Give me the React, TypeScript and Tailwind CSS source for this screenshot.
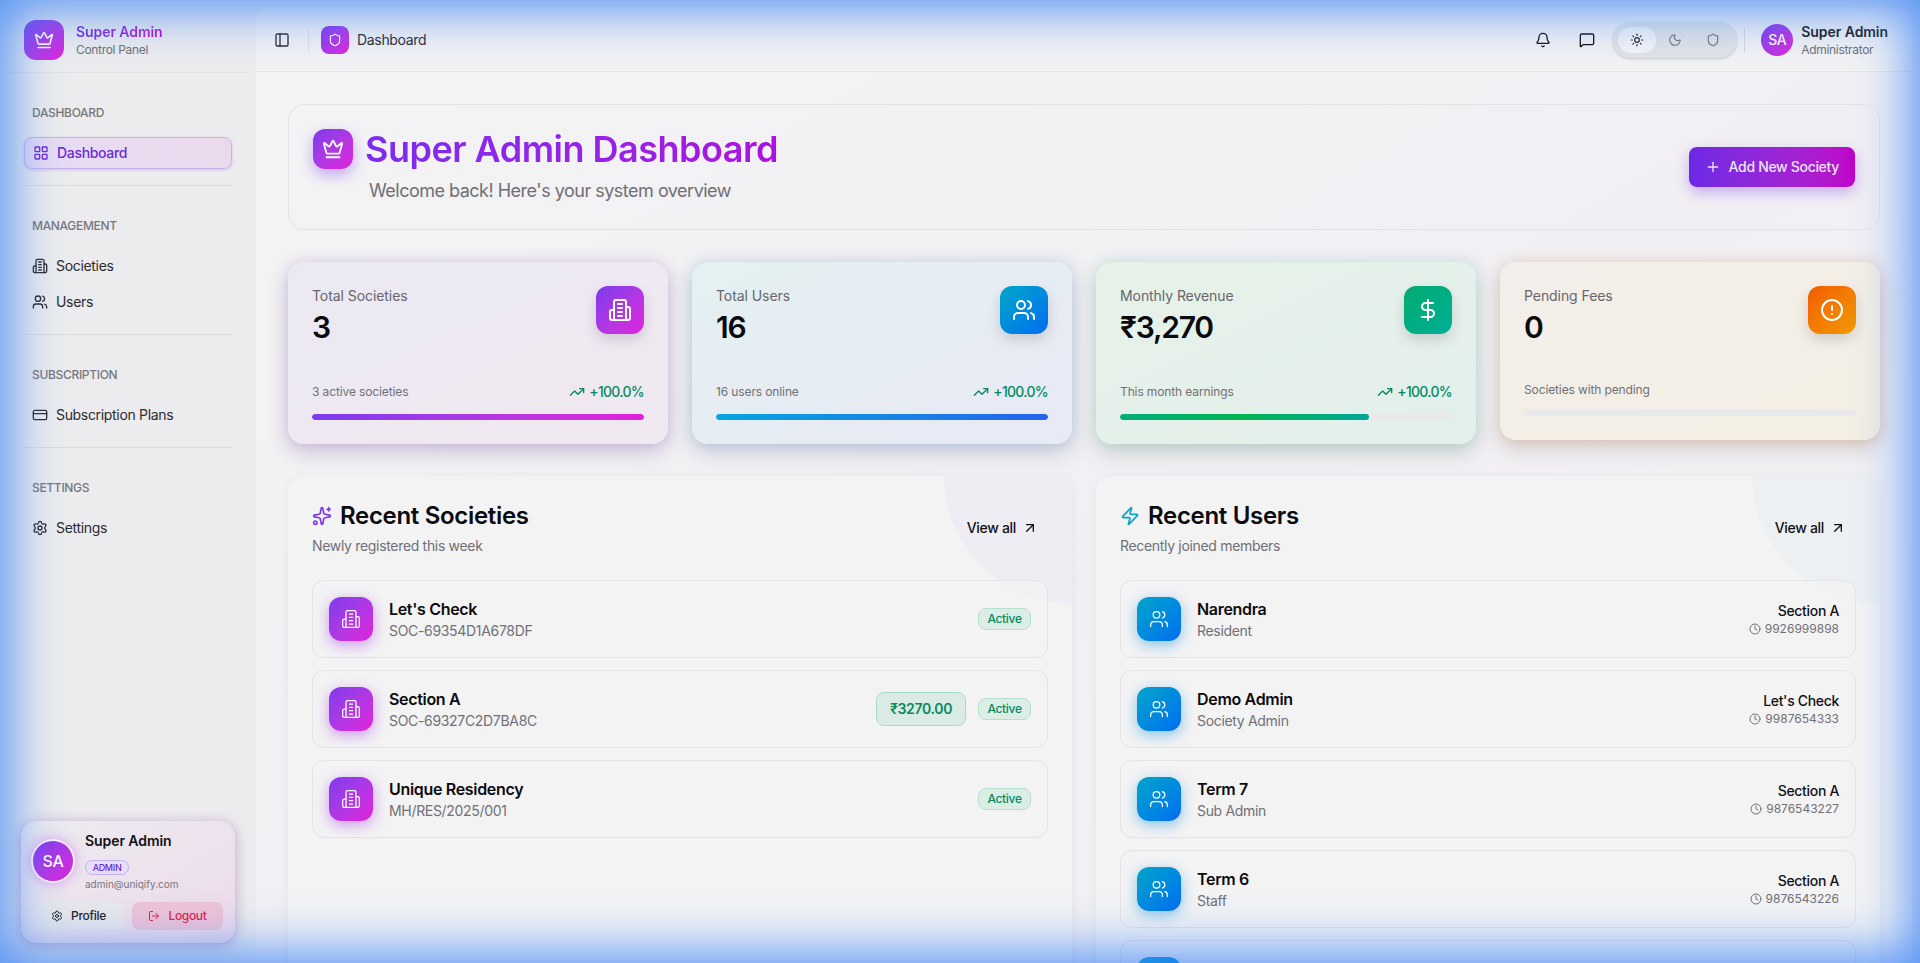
import React from 'react';
import {
  ArrowUpRight,
  Bell,
  CircleAlert,
  Clock,
  Crown,
  CreditCard,
  DollarSign,
  LayoutGrid,
  LogOut,
  MessageSquare,
  Moon,
  PanelLeft,
  Plus,
  Settings,
  Shield,
  Sparkles,
  Sun,
  TrendingUp,
  Users,
  Zap,
} from 'lucide-react';

const purple = 'bg-gradient-to-br from-[#7c3aed] to-[#e11ddb]';
const blue = 'bg-gradient-to-br from-[#06a5c9] to-[#0a6cf0]';

// the tower with two wings, lucide's current Building2 has a door instead
const Tower = ({ size = 16, strokeWidth = 2 }: { size?: number; strokeWidth?: number }) => (
  <svg
    width={size}
    height={size}
    viewBox="0 0 24 24"
    fill="none"
    stroke="currentColor"
    strokeWidth={strokeWidth}
    strokeLinecap="round"
    strokeLinejoin="round"
  >
    <path d="M6 22V4a2 2 0 0 1 2-2h8a2 2 0 0 1 2 2v18Z" />
    <path d="M6 12H4a2 2 0 0 0-2 2v6a2 2 0 0 0 2 2h2" />
    <path d="M18 9h2a2 2 0 0 1 2 2v9a2 2 0 0 1-2 2h-2" />
    <path d="M10 6h4" />
    <path d="M10 10h4" />
    <path d="M10 14h4" />
    <path d="M10 18h4" />
  </svg>
);

const NavGroup = ({ label, children }: { label: string; children: React.ReactNode }) => (
  <div className="mx-6 border-b border-[#dcdcde] pb-4 pt-8">
    <div className="mb-4 ml-2 text-xs font-medium leading-4 text-[#77777d]">{label}</div>
    <div className="flex w-52 flex-col gap-1">{children}</div>
  </div>
);

const NavItem = ({ icon: Icon, label }: { icon: any; label: string }) => (
  <div className="flex h-8 items-center gap-2 px-2 text-sm text-[#2b2b30]">
    <Icon size={16} />
    <span>{label}</span>
  </div>
);

const stats = [
  {
    label: 'Total Societies',
    value: '3',
    note: '3 active societies',
    icon: Tower,
    box: purple,
    bar: 'bg-gradient-to-r from-[#7c3aed] to-[#e11ddb]',
    width: '100%',
    card: 'from-[#eae9f2] to-[#f1e8f1] shadow-[0_8px_20px_rgba(90,70,130,0.25),0_0_14px_rgba(190,110,230,0.22)]',
  },
  {
    label: 'Total Users',
    value: '16',
    note: '16 users online',
    icon: Users,
    box: blue,
    bar: 'bg-gradient-to-r from-[#06a5e0] to-[#2563eb]',
    width: '100%',
    card: 'from-[#e4f0f1] to-[#e8e9f5] shadow-[0_8px_20px_rgba(70,90,130,0.25),0_0_14px_rgba(90,170,230,0.22)]',
  },
  {
    label: 'Monthly Revenue',
    value: '₹3,270',
    note: 'This month earnings',
    icon: DollarSign,
    box: 'bg-gradient-to-br from-[#02ab6e] to-[#02ae96]',
    bar: 'bg-gradient-to-r from-[#02ae78] via-[#04b553] to-[#02a595]',
    width: '75%',
    card: 'from-[#e6f1e9] to-[#e3efeb] shadow-[0_8px_20px_rgba(70,110,100,0.25),0_0_14px_rgba(90,210,180,0.2)]',
  },
  {
    label: 'Pending Fees',
    value: '0',
    note: 'Societies with pending',
    icon: CircleAlert,
    box: 'bg-gradient-to-br from-[#f35a02] to-[#f09a02]',
    width: '0%',
    card: 'from-[#f3eeea] to-[#f3efe3] shadow-[0_8px_20px_rgba(120,90,70,0.25),0_0_14px_rgba(240,150,90,0.2)]',
  },
];

const societies = [
  { name: "Let's Check", code: 'SOC-69354D1A678DF' },
  { name: 'Section A', code: 'SOC-69327C2D7BA8C', amount: '₹3270.00' },
  { name: 'Unique Residency', code: 'MH/RES/2025/001' },
];

const users = [
  { name: 'Narendra', role: 'Resident', where: 'Section A', phone: '9926999898' },
  { name: 'Demo Admin', role: 'Society Admin', where: "Let's Check", phone: '9987654333' },
  { name: 'Term 7', role: 'Sub Admin', where: 'Section A', phone: '9876543227' },
  { name: 'Term 6', role: 'Staff', where: 'Section A', phone: '9876543226' },
];

const rowClass = 'flex h-[78px] items-center justify-between rounded-xl border border-[#e4e4e6] bg-[#f2f2f3]/70 p-4';

const RecentCard = ({
  icon,
  title,
  sub,
  corner,
  children,
}: {
  icon: React.ReactNode;
  title: string;
  sub: string;
  corner: string;
  children: React.ReactNode;
}) => (
  <section className="relative overflow-hidden rounded-2xl bg-[#f3f3f4] p-6 shadow-[0_2px_10px_rgba(60,60,80,0.07)]">
    <div className={`absolute right-0 top-0 h-32 w-32 rounded-bl-full ${corner}`} />
    <div className="relative mb-6 flex h-14 items-center justify-between">
      <div>
        <div className="flex items-center gap-2 text-2xl font-semibold leading-8 tracking-[-0.013em] text-[#0b0b0f]">
          {icon}
          <h2>{title}</h2>
        </div>
        <p className="mt-1 text-sm leading-5 text-[#707076]">{sub}</p>
      </div>
      <button className="flex h-9 items-center gap-1.5 pl-3 pr-2.5 text-sm font-medium text-[#111115]">
        View all <ArrowUpRight size={16} />
      </button>
    </div>
    <div className="relative flex flex-col gap-3">{children}</div>
  </section>
);

export default function App() {
  return (
    <div className="relative flex h-[963px] overflow-hidden bg-[#ececee] font-[Inter,sans-serif] tracking-[-0.02em]">
      <aside className="flex h-full w-64 shrink-0 flex-col">
        <div className="mx-2 box-content flex h-[65px] shrink-0 items-center gap-3 border-b border-[#e2e2e4] px-4 pt-[7px]">
          <div className={`flex h-10 w-10 items-center justify-center rounded-xl text-white ${purple}`}>
            <Crown size={20} />
          </div>
          <div>
            <div className="bg-gradient-to-r from-[#6d28e6] to-[#c000d0] bg-clip-text text-sm font-semibold leading-5 tracking-[-0.005em] text-transparent">
              Super Admin
            </div>
            <div className="text-xs leading-4 text-[#707076]">Control Panel</div>
          </div>
        </div>

        <NavGroup label="DASHBOARD">
          <div className="flex h-8 items-center gap-2 rounded-lg border border-[#c9b3ee] bg-gradient-to-r from-[#e6dcf3] to-[#ecd9ec] px-2 text-sm font-medium text-[#6d28d9] shadow-[0_1px_3px_rgba(110,60,200,0.25)]">
            <LayoutGrid size={16} />
            <span>Dashboard</span>
          </div>
        </NavGroup>
        <NavGroup label="MANAGEMENT">
          <NavItem icon={Tower} label="Societies" />
          <NavItem icon={Users} label="Users" />
        </NavGroup>
        <NavGroup label="SUBSCRIPTION">
          <NavItem icon={CreditCard} label="Subscription Plans" />
        </NavGroup>
        <div className="mx-6 pt-8">
          <div className="mb-4 ml-2 text-xs font-medium leading-4 text-[#77777d]">SETTINGS</div>
          <NavItem icon={Settings} label="Settings" />
        </div>

        <div className="mx-[21px] mb-5 mt-auto rounded-2xl bg-gradient-to-br from-[#ececf0] to-[#edd9ea] px-3 pb-[13px] pt-[10px] shadow-[0_4px_14px_rgba(80,60,130,0.25),0_0_12px_rgba(200,110,220,0.25)]">
          <div className="flex items-center gap-3">
            <div className={`flex h-10 w-10 shrink-0 items-center justify-center rounded-full text-base font-medium text-white ring-2 ring-white/80 shadow-[0_0_14px_rgba(190,60,230,0.6)] ${purple}`}>
              SA
            </div>
            <div>
              <div className="text-sm font-semibold leading-5 tracking-[-0.005em] text-[#111115]">Super Admin</div>
              <span className="mt-[9px] flex h-[15px] w-11 items-center justify-center rounded-full border border-[#c4aef0] bg-[#e6dff5] text-[9px] font-medium text-[#6d28d9]">
                ADMIN
              </span>
              <div className="mt-[3px] text-[10px] leading-3 tracking-normal text-[#77777d]">admin@uniqify.com</div>
            </div>
          </div>
          <div className="mt-3 flex gap-2">
            <button className="flex h-7 flex-1 items-center justify-center gap-2 rounded-lg bg-[#e8e8eb] text-xs font-medium text-[#222226]">
              <Settings size={12} /> Profile
            </button>
            <button className="flex h-7 flex-1 items-center justify-center gap-2 rounded-lg bg-[#eec3d7] text-xs font-medium text-[#e11d48]">
              <LogOut size={12} /> Logout
            </button>
          </div>
        </div>
      </aside>

      <main className="mr-2 mt-2 min-w-0 flex-1 overflow-hidden rounded-t-xl bg-[#f2f2f3]">
        <header className="flex h-16 items-center border-b border-[#e4e4e6] pl-3 pr-6">
          <button className="flex h-7 w-7 items-center justify-center text-[#2b2b30]">
            <PanelLeft size={16} />
          </button>
          <div className="mx-3 h-6 w-px bg-[#dfdfe2]" />
          <div className={`flex h-7 w-7 items-center justify-center rounded-lg text-white ${purple}`}>
            <Shield size={14} />
          </div>
          <span className="ml-2 text-sm text-[#2b2b30]">Dashboard</span>

          <div className="ml-auto flex items-center gap-2">
            <button className="flex h-9 w-9 items-center justify-center text-[#111115]">
              <Bell size={16} />
            </button>
            <button className="flex h-9 w-9 items-center justify-center text-[#111115]">
              <MessageSquare size={16} />
            </button>
            <div className="flex h-9 items-center rounded-full bg-[#e2e3e6] px-[5px] shadow-[0_1px_3px_rgba(0,0,0,0.18)]">
              <div className="flex h-[26px] w-[38px] items-center justify-center rounded-full bg-[#f4f4f5] text-[#222226]">
                <Sun size={14} />
              </div>
              <div className="flex h-[26px] w-[38px] items-center justify-center text-[#77777d]">
                <Moon size={14} />
              </div>
              <div className="flex h-[26px] w-[38px] items-center justify-center text-[#77777d]">
                <Shield size={14} />
              </div>
            </div>
          </div>
          <div className="ml-[7px] mr-4 h-6 w-px bg-[#d6d6d9]" />
          <div className={`flex h-8 w-8 items-center justify-center rounded-full text-sm font-medium text-white ${purple}`}>
            SA
          </div>
          <div className="ml-2">
            <div className="text-sm font-semibold leading-5 tracking-[-0.004em] text-[#1a1a20]">Super Admin</div>
            <div className="text-xs leading-4 text-[#707076]">Administrator</div>
          </div>
        </header>

        <div className="bg-gradient-to-br from-[#f3f3f4] via-[#f1eff3] to-[#f3f3f4] p-8">
          <section className="mb-8 flex items-center justify-between rounded-2xl border border-[#e3e3e6] p-6">
            <div>
              <div className="flex items-center gap-3">
                <div className={`flex h-10 w-10 items-center justify-center rounded-xl text-white shadow-[0_6px_14px_rgba(124,58,237,0.4)] ${purple}`}>
                  <Crown size={22} />
                </div>
                <h1 className="bg-gradient-to-r from-[#7c2bf0] to-[#ac10de] bg-clip-text text-4xl font-semibold leading-10 tracking-[-0.014em] text-transparent">
                  Super Admin Dashboard
                </h1>
              </div>
              <p className="ml-14 mt-2 text-lg leading-7 tracking-[-0.028em] text-[#6f6f75]">Welcome back! Here's your system overview</p>
            </div>
            <button className="flex h-10 items-center gap-2 rounded-lg bg-gradient-to-r from-[#6d28e6] to-[#c000c8] px-4 text-sm font-medium text-[#ece4f8] shadow-[0_6px_14px_rgba(124,58,237,0.35)]">
              <Plus size={16} /> Add New Society
            </button>
          </section>

          <div className="mb-8 grid grid-cols-4 items-start gap-6">
            {stats.map((s) => (
              <div key={s.label} className={`rounded-2xl bg-gradient-to-br p-6 ${s.card}`}>
                <div className="flex items-start justify-between">
                  <div>
                    <div className="text-sm leading-5 tracking-[-0.005em] text-[#66666c]">{s.label}</div>
                    <div className="mt-[3px] text-3xl font-semibold leading-9 tracking-[-0.04em] text-[#0b0b0f]">{s.value}</div>
                  </div>
                  <div className={`flex h-12 w-12 items-center justify-center rounded-xl text-white shadow-[0_6px_12px_rgba(60,60,80,0.18)] ${s.box}`}>
                    <s.icon size={24} />
                  </div>
                </div>
                <div className="mt-[37px] flex items-center justify-between">
                  <span className="text-xs leading-4 tracking-[-0.01em] text-[#707076]">{s.note}</span>
                  {s.bar && (
                    <span className="flex h-5 items-center gap-1 text-sm font-medium tracking-[-0.05em] text-[#058a5f]">
                      <TrendingUp size={16} /> +100.0%
                    </span>
                  )}
                </div>
                <div className="mt-3 h-1.5 overflow-hidden rounded-full bg-[#e9e8ea]">
                  <div className={`h-full rounded-full ${s.bar ?? ''}`} style={{ width: s.width }} />
                </div>
              </div>
            ))}
          </div>

          <div className="grid grid-cols-2 gap-6">
            <RecentCard
              icon={<Sparkles size={20} className="text-[#7c3aed]" />}
              title="Recent Societies"
              sub="Newly registered this week"
              corner="bg-[#eeedf3]"
            >
              {societies.map((s) => (
                <div key={s.code} className={rowClass}>
                  <div className="flex items-center gap-4">
                    <div className={`flex h-11 w-11 items-center justify-center rounded-xl text-white shadow-[0_4px_14px_rgba(168,60,230,0.5)] ${purple}`}>
                      <Tower size={20} strokeWidth={1.5} />
                    </div>
                    <div>
                      <div className="text-base font-semibold leading-6 text-[#0b0b0f]">{s.name}</div>
                      <div className="text-sm leading-5 text-[#707076]">{s.code}</div>
                    </div>
                  </div>
                  <div className="flex items-center gap-3">
                    {s.amount && (
                      <span className="flex h-[34px] w-[90px] items-center justify-center rounded-lg border border-[#a9dcc8] bg-[#d9ebe4] text-sm font-semibold text-[#058a5f]">
                        {s.amount}
                      </span>
                    )}
                    <span className="flex h-[22px] w-[53px] items-center justify-center rounded-lg border border-[#b4e0ce] bg-[#dcede6] text-xs font-medium text-[#058a5f]">
                      Active
                    </span>
                  </div>
                </div>
              ))}
            </RecentCard>

            <RecentCard
              icon={<Zap size={20} className="text-[#06a5c9]" />}
              title="Recent Users"
              sub="Recently joined members"
              corner="bg-[#ecf0f2]"
            >
              {users.map((u) => (
                <div key={u.name} className={rowClass}>
                  <div className="flex items-center gap-4">
                    <div className={`flex h-11 w-11 items-center justify-center rounded-xl text-white shadow-[0_4px_14px_rgba(6,140,220,0.45)] ${blue}`}>
                      <Users size={20} strokeWidth={1.5} />
                    </div>
                    <div>
                      <div className="text-base font-semibold leading-6 text-[#0b0b0f]">{u.name}</div>
                      <div className="text-sm leading-5 text-[#707076]">{u.role}</div>
                    </div>
                  </div>
                  <div className="flex flex-col items-end">
                    <div className="text-sm font-medium leading-5 text-[#111115]">{u.where}</div>
                    <div className="flex items-center gap-1 text-xs leading-4 tracking-normal text-[#707076]">
                      <Clock size={12} /> {u.phone}
                    </div>
                  </div>
                </div>
              ))}
              <div className={rowClass}>
                <div className={`h-11 w-11 rounded-xl ${blue}`} />
              </div>
            </RecentCard>
          </div>
        </div>
      </main>

      {/* blue glow round the window edge */}
      <div className="pointer-events-none absolute inset-0 shadow-[inset_0_0_50px_10px_rgba(59,130,246,0.85)]" />
    </div>
  );
}
